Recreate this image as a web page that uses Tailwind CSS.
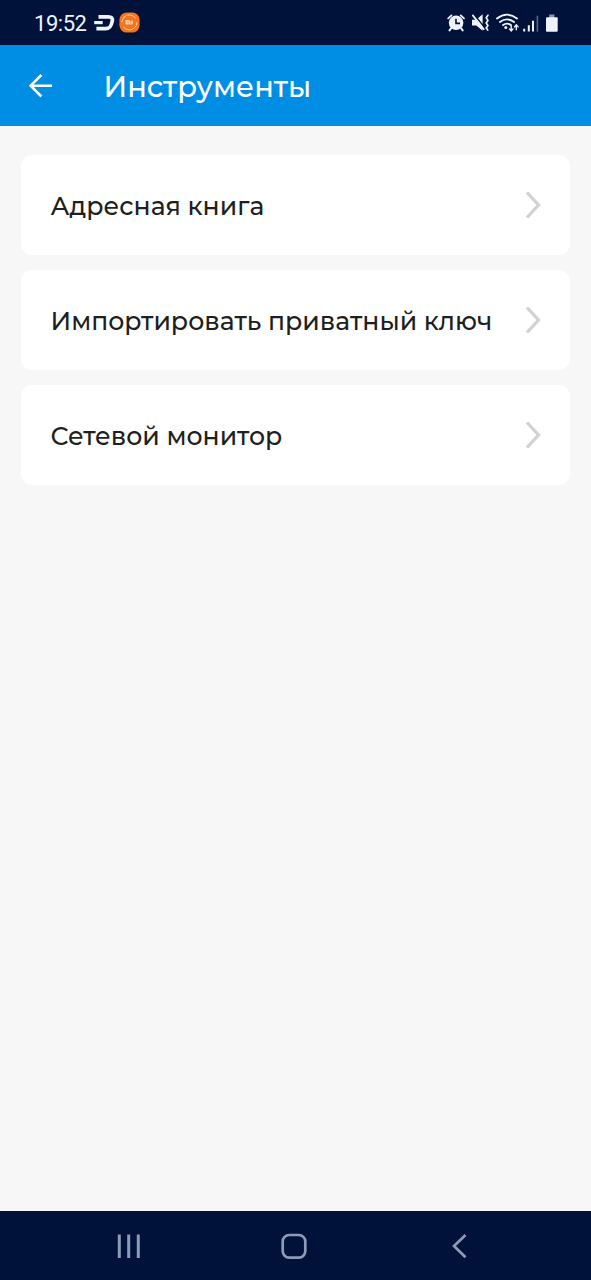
<!DOCTYPE html>
<html lang="ru">
<head>
<meta charset="utf-8">
<title>Инструменты</title>
<script src="https://cdn.jsdelivr.net/npm/@tailwindcss/browser@4"></script>
</head>
<body class="flex h-screen flex-col overflow-hidden bg-[#f7f7f7] font-['Montserrat','Inter',sans-serif]">
  <div class="flex h-[45px] shrink-0 items-center justify-between bg-[#00123a] pr-[32px] pl-[34px] text-[#eef3ff]">
    <div class="flex items-center">
      <span class="w-[59px] pt-px font-['Roboto',sans-serif] text-[22px] leading-[45px] tracking-[-0.45px]">19:52</span>
      <svg class="h-[18px] w-[22px]" viewBox="0 0 22 18" fill="none" stroke="currentColor" stroke-width="3.7"><path d="M5.5 2.8h9.800c3.200 0 4.500 1.200 3.900 4.400-.9 5.400-2.500 7.500-6.600 7.500H3.400"/><path d="M1.200 8.600h8.500" stroke-width="3.200"/></svg>
      <svg class="ml-[4px] h-[21px] w-[21px]" viewBox="0 0 21 21"><rect x=".4" y=".4" width="20.200" height="20.200" rx="7.500" fill="#f4731c"/><circle cx="10.400" cy="10.400" r="7.500" fill="none" stroke="#ffd3a4" stroke-width="1" stroke-dasharray="19 4.500"/><path d="M7.200 12.500V8.900h2.600q1.100 0 1.100 1.200v2.400M9 10.300v2.200M13 8.500v4" fill="none" stroke="#fff1df" stroke-width="1.200"/></svg>
    </div>
    <svg class="h-[24px] w-[114px]" viewBox="445 10 114 24" fill="none" stroke="currentColor" stroke-linecap="round">
      <path d="M448.200 17.400l3.300-3M464 17.400l-3.300-3" stroke-width="1.800"/>
      <circle cx="456.100" cy="21.800" r="7.300" fill="currentColor" stroke="none"/>
      <path d="M451 27.400l-1.500 2M461.200 27.400l1.500 2" stroke-width="2"/>
      <path d="M456 17.700v4.700h4" stroke="#00123a" stroke-width="1.600" stroke-linecap="butt"/>
      <path d="M472 18.700h4.300l6.300-5.500v16.600l-6.300-5.300H472z" fill="currentColor" stroke="none"/>
      <path d="M474.300 13.700l10.500 13.200" stroke="#00123a" stroke-width="1.500"/>
      <path d="M472.800 14.400l11 13.800" stroke-width="1.700"/>
      <path d="M487.900 14.300l-1.700 2.500 1.700 2.600-1.700 2.600 1.700 2.600-1.700 2.500 1.500 2" stroke-width="1.700"/>
      <path d="M497 17.400q10-7.500 20 0M499.900 21q7.100-5.300 14.200 0M503.100 24.100q3.900-2.900 7.800 0" stroke-width="1.900"/>
      <circle cx="505.800" cy="26.600" r="1.500" fill="currentColor" stroke="none"/>
      <path d="M511.200 24.900v4.900m-1.800-1.900l1.800 2 1.800-2M516.300 28.700v-4.700m-1.800 1.900l1.800-2 1.800 2" stroke-width="1.400"/>
      <path d="M524.200 27.700v2.900M528.800 24.300v6.300M533 19.700v10.900" stroke-width="2" stroke-linecap="butt"/>
      <path d="M537.400 14.700v15.900" stroke="#596683" stroke-width="1.600" stroke-linecap="butt"/>
      <path d="M549.200 13.500h5.200v3.500h-5.200z" fill="#8c95ab" stroke="none"/>
      <rect x="546" y="16.300" width="11.700" height="14.400" rx="1" fill="currentColor" stroke="none"/>
    </svg>
  </div>
  <header class="flex h-[81px] shrink-0 items-center bg-[#008de4] pl-[28px] text-white">
    <svg class="h-[24px] w-[25px]" viewBox="0 0 25 24" fill="none" stroke="currentColor" stroke-width="2.500"><path d="M24 11.700H2.500M13.400 1L2.600 11.700l10.800 10.800"/></svg>
    <h1 class="ml-[50.5px] pt-[2px] text-[28.800px] leading-[40px] font-medium whitespace-nowrap">Инструменты</h1>
  </header>
  <main class="flex flex-1 flex-col gap-[15px] px-[21px] pt-[29px]">
    <button class="flex h-[100px] w-full items-center justify-between rounded-[11px] bg-white pr-[29px] pl-[29.5px] font-medium text-[#1d1f21]">
      <span class="pt-[2px] text-[25.125px] leading-[36px] whitespace-nowrap">Адресная книга</span>
      <svg class="h-[28px] w-[16px] shrink-0" viewBox="0 0 16 28" fill="none" stroke="#d2d2d2" stroke-width="3.300"><path d="M2 1.500l11.500 12.500L2 26.500"/></svg>
    </button>
    <button class="flex h-[100px] w-full items-center justify-between rounded-[11px] bg-white pr-[29px] pl-[29.5px] font-medium text-[#1d1f21]">
      <span class="pt-[2px] text-[25.125px] leading-[36px] whitespace-nowrap">Импортировать приватный ключ</span>
      <svg class="h-[28px] w-[16px] shrink-0" viewBox="0 0 16 28" fill="none" stroke="#d2d2d2" stroke-width="3.300"><path d="M2 1.500l11.500 12.500L2 26.500"/></svg>
    </button>
    <button class="flex h-[100px] w-full items-center justify-between rounded-[11px] bg-white pr-[29px] pl-[29.5px] font-medium text-[#1d1f21]">
      <span class="pt-[2px] text-[25.125px] leading-[36px] whitespace-nowrap">Сетевой монитор</span>
      <svg class="h-[28px] w-[16px] shrink-0" viewBox="0 0 16 28" fill="none" stroke="#d2d2d2" stroke-width="3.300"><path d="M2 1.500l11.500 12.500L2 26.500"/></svg>
    </button>
  </main>
  <nav class="flex h-[69px] shrink-0 items-center bg-[#00123a] pl-[117px] text-[#8d9ab8]">
    <svg class="h-[26px] w-[24px]" viewBox="0 0 24 26" fill="none" stroke="currentColor" stroke-width="3"><path d="M2.300 1.500v23.500M11.700 1.500v23.500M21.300 1.500v23.500"/></svg>
    <svg class="ml-[140px] h-[26px] w-[26px]" viewBox="0 0 26 26" fill="none" stroke="currentColor" stroke-width="2.700"><rect x="1.700" y="2" width="22.600" height="22.600" rx="6.500"/></svg>
    <svg class="ml-[144px] h-[26px] w-[16px]" viewBox="0 0 16 26" fill="none" stroke="currentColor" stroke-width="2.700"><path d="M14.500 2L3 13l11.500 11.200"/></svg>
  </nav>
</body>
</html>
